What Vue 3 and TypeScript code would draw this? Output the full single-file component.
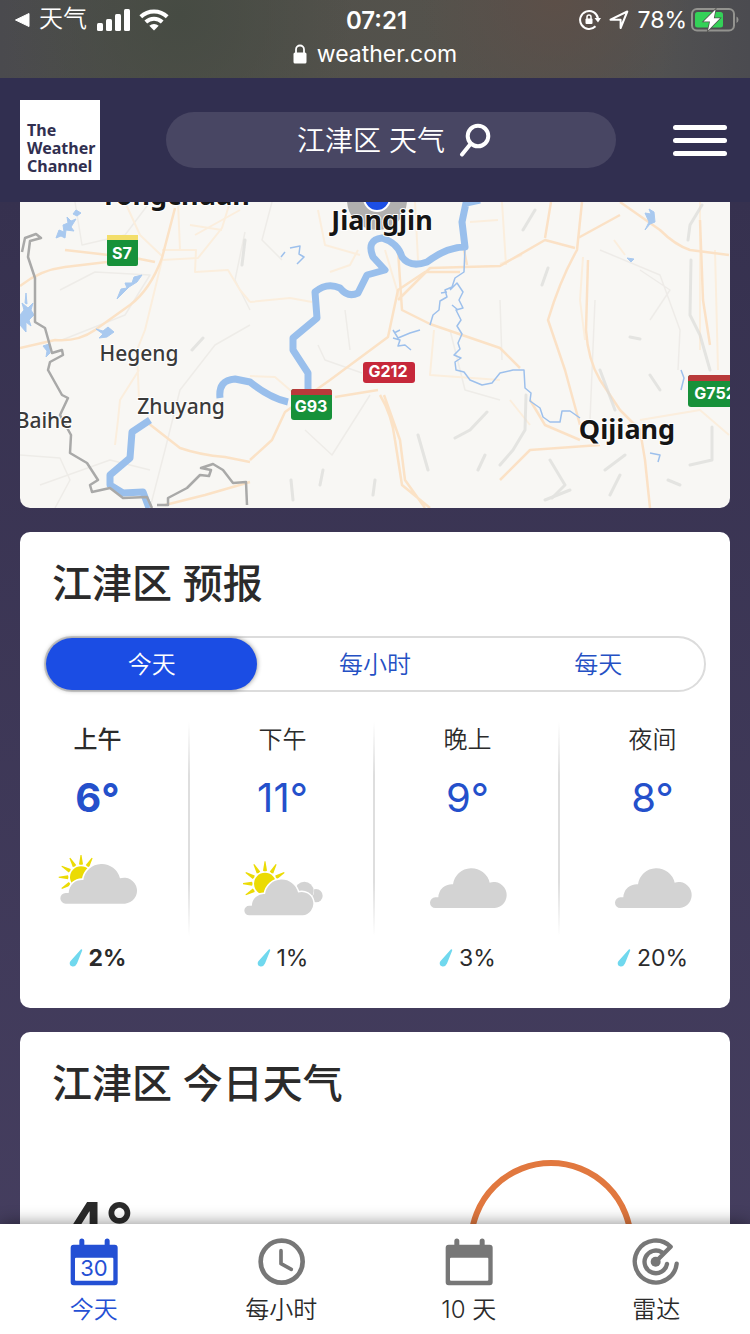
<script setup lang="ts">
import { ref } from 'vue'

type Sky = 'sunny-cloud' | 'sunny-clouds' | 'cloud'

interface Period {
  label: string
  temp: string
  sky: Sky
  rain: string
}

const tabs = ['今天', '每小时', '每天']
const activeTab = ref(0)

const periods: Period[] = [
  { label: '上午', temp: '6°', sky: 'sunny-cloud', rain: '2%' },
  { label: '下午', temp: '11°', sky: 'sunny-clouds', rain: '1%' },
  { label: '晚上', temp: '9°', sky: 'cloud', rain: '3%' },
  { label: '夜间', temp: '8°', sky: 'cloud', rain: '20%' },
]

const navItems = [
  { id: 'today', label: '今天' },
  { id: 'hourly', label: '每小时' },
  { id: 'tenday', label: '10 天' },
  { id: 'radar', label: '雷达' },
]

const cloudPath =
  'M16 0a16 16 0 0 1 0-32H25A40 40 0 0 1 69-71A56 56 0 0 1 179-76A39 39 0 1 1 194 0Z'
const rayAngles: Record<string, number[]> = {
  'sunny-cloud': [-120, -90, -60, -30, 0, 30],
  'sunny-clouds': [-120, -90, -60, -30, 0, 30, 60],
}
</script>

<template>
  <div class="app">
    <div class="status">
      <div class="status-row">
        <div class="status-left">
          <svg width="16" height="16" viewBox="0 0 16 16"><path d="M1.500 8L15 1.500V14.500Z" fill="#fff" stroke="#fff" stroke-linejoin="round" /></svg>
          <span class="back">天气</span>
          <svg width="34" height="22" viewBox="0 0 34 22" fill="#fff">
            <rect x="0" y="14" width="6" height="8" rx="1.500" />
            <rect x="9" y="10" width="6" height="12" rx="1.500" />
            <rect x="18" y="5" width="6" height="17" rx="1.500" />
            <rect x="27" y="0" width="6" height="22" rx="1.500" />
          </svg>
          <svg class="wifi" width="30" height="22" viewBox="0 0 30 22" fill="none" stroke="#fff" stroke-width="4">
            <path d="M1.800 7.800A19 19 0 0 1 28.200 7.800" />
            <path d="M6.800 13A12 12 0 0 1 23.200 13" />
            <path d="M15 21.500L10.300 16.800A7 7 0 0 1 19.700 16.800Z" fill="#fff" stroke="none" />
          </svg>
        </div>
        <span class="time">07:21</span>
        <div class="status-right">
          <svg width="22" height="22" viewBox="0 0 22 22" fill="none" stroke="#fff" stroke-width="2">
            <path d="M19 9.500A9 9 0 1 0 16.500 17.300" />
            <path d="M15.500 9H22L19 13.500Z" fill="#fff" stroke="none" />
            <rect x="6.500" y="9.500" width="7" height="5.500" rx="1" fill="#fff" stroke="none" />
            <path d="M8 10V8a2 2 0 0 1 4 0V10" stroke-width="1.500" />
          </svg>
          <svg width="20" height="20" viewBox="0 0 20 20" fill="none" stroke="#fff" stroke-width="2" stroke-linejoin="round"><path d="M1.500 9.700L18.300 1.500L11.600 18V9.700Z" /></svg>
          <span class="percent">78%</span>
          <svg class="battery" width="48" height="24" viewBox="0 0 48 24">
            <rect x="1" y="1" width="42" height="21.500" rx="5" fill="none" stroke="#93938f" stroke-width="2" />
            <path d="M45.500 8.500Q47.500 9.500 47.500 11.700T45.500 15Z" fill="#93938f" />
            <rect x="4" y="4" width="28" height="15.500" rx="2.500" fill="#34d158" />
            <path d="M24.500 1.500L12.500 13.500H19L17 22.500L29 10.300H22.800Z" fill="#fff" stroke="#53534f" stroke-width="1.500" paint-order="stroke" />
          </svg>
        </div>
      </div>
      <div class="url">
        <svg width="14" height="20" viewBox="0 0 14 20"><path d="M3 10V5.500a4 4 0 0 1 8 0V10" fill="none" stroke="#fff" stroke-width="1.800" /><rect x="0.500" y="8.500" width="13" height="11" rx="1.500" fill="#fff" /></svg>
        <span>weather.com</span>
      </div>
    </div>

    <header class="header">
      <a href="#" class="logo">The<br />Weather<br />Channel</a>
      <button type="button" class="search">
        <span>江津区 天气</span>
        <svg width="32" height="34" viewBox="0 0 32 34" fill="none" stroke="#fff" stroke-width="4" stroke-linecap="round">
          <circle cx="19" cy="13" r="10.300" />
          <path d="M11.500 21L3 31.500" />
        </svg>
      </button>
      <button type="button" class="menu" aria-label="菜单"><i></i><i></i><i></i></button>
    </header>

    <main class="main">
      <svg class="map" viewBox="20 202 710 306" preserveAspectRatio="xMidYMid slice" role="img" aria-label="地图">
        <rect x="20" y="202" width="710" height="306" fill="#f8f7f4" />
        <g fill="none" stroke="#eeece8" stroke-width="1.500" stroke-linejoin="round">
          <path d="M75 202L82 245L125 235L150 202M60 290L95 272L150 275L125 315L62 340M20 455L60 458L70 480L55 508" />
          <path d="M250 325L215 345L180 390L165 450L150 508M245 232L235 280L250 310M318 345L325 360L362 373M345 310L350 350M370 395L332 455L305 430" />
          <path d="M595 300L590 420M600 250L660 275L680 330L678 370M500 300L502 360M640 270L670 290L650 320" />
          <path d="M272 202L262 240L282 260M450 330L465 390L500 400M40 485L110 460L150 470" />
        </g>
        <g fill="none" stroke="#fbeedd" stroke-width="2" stroke-linejoin="round">
          <path d="M125 202L140 235L162 256M230 202L222 228L198 258L162 260M178 202L180 250M190 225L222 230M162 250H196L195 272L228 270L240 290L250 302" />
          <path d="M162 260L145 330L137 350L139 400M139 370L120 400L118 420L115 445M195 235L240 210" />
          <path d="M250 302L290 298L312 302M318 210L325 245L360 255M330 272L350 265L358 250M250 376L275 377L305 403M415 202L418 260M470 222L498 220M434 330L430 375L500 380" />
          <path d="M614 240L625 255M583 257L580 300L585 340M640 420L700 410L729 435M502 202L506 265M500 264L522 255M510 400L530 425M700 202V350M715 250L718 370M385 250L400 300" />
        </g>
        <g fill="none" stroke="#fbe2c6" stroke-width="2.500" stroke-linejoin="round">
          <path d="M175 208L162 258Q150 290 130 305L95 330Q78 342 55 340L20 348M20 286Q40 270 65 267L107 262M155 262L135 258L65 250" />
          <path d="M148 423L180 448Q200 455 225 457L250 462M250 460L272 440L285 412L330 380L388 337L398 290L425 272L460 272M250 482L205 495L165 505" />
          <path d="M398 250L402 310L430 324L500 348L520 368M398 300L430 268L500 266L545 240L575 248M380 395Q392 415 395 440L402 485L430 508M384 395L400 440L405 480L425 508M335 397L378 390" />
          <path d="M551 202L545 238M582 202L577 250Q560 280 548 320L565 370L580 425M620 202L660 230Q675 245 690 250L729 255M578 238L620 215M588 260L586 330Q588 360 600 380L620 410L640 430L645 460L650 508" />
          <path d="M700 220L703 300L710 345M500 480L530 450L600 445M530 400L545 425L580 440M465 202L462 240L467 265" />
        </g>
        <g fill="none" stroke="#dcdcd9" stroke-width="3" stroke-linecap="round" stroke-linejoin="round" opacity="0.700">
          <path d="M702 205L690 225L688 240M691 260L690 315L700 335L710 370M535 210L523 230M548 268L542 285" />
          <path d="M526 395L525 430L513 450L500 465M550 460L565 485L552 498M600 370L615 410M650 375L660 390M630 337L640 339M712 427V460L690 465M625 455L605 470M620 475L610 495M668 480L680 485M487 412L470 430L455 438" />
          <path d="M418 435L428 470M323 470L320 485M291 480L293 500M375 480L373 495M485 455L478 470M203 338L192 350M245 240L242 265M570 490L545 500" />
        </g>
        <g fill="none" stroke="#99bfec" stroke-width="7" stroke-linejoin="round">
          <path d="M480 200L466 203L462 222L465 247Q447 247 427 262Q410 268 402 257Q398 243 382 238Q366 240 373 257L385 270L367 275L358 293Q348 298 340 288Q327 282 315 292L317 318L293 338V350L308 373V390" />
          <path d="M288 402Q270 398 250 382L235 379Q218 380 220 398" />
          <path d="M150 420L132 432L130 458L110 475V485L123 493L143 492L149 508" />
        </g>
        <g fill="none" stroke="#9dc0ec" stroke-width="1.500" stroke-linejoin="round">
          <path d="M465 247L464 272L455 278L452 287L445 290L447 297L440 301L439 310L433 315L430 325M450 290L457 283L463 292L459 300L463 308L456 310L461 320L457 326L462 334L458 343L460 349L454 355L461 358L455 362L456 370L464 372L470 380L482 385L492 383L500 373L513 370H524L525 388L531 393L530 401L540 408L543 417L550 422H560L562 411H570L580 418" />
          <path d="M393 330L398 338L410 333L420 330M393 338L400 340L398 346L405 345L411 350M394 333L400 330M281 257L285 252M290 248L300 246L299 254L304 257L297 264M650 453L660 455L658 462M447 292L441 293M458 310L452 305M681 370L684 378L681 390" />
        </g>
        <g fill="#a9c9ef" stroke="#a9c9ef" stroke-linejoin="round">
          <path d="M56 238L59 230L64 232L63 225L68 223L67 217L71 221L76 219L71 227L74 231L66 230L65 238L61 236ZM73 214L76 210L81 213L77 216ZM117 299L121 289L127 288L125 283L132 283L134 277L142 275L137 282L129 287L124 292Z" />
          <path d="M20 315L24 310L22 303L28 308L33 303L31 310L34 315L29 320L31 326L26 322V332L20 325ZM26 293L27 304L25 303ZM96 329L103 331L108 327L114 332L107 337L99 338L103 334ZM43 346L49 344L50 353L46 357L47 351ZM645 213L651 214L649 209L654 212L655 222L650 224L645 230L649 222ZM627 258L634 259L631 262Z" />
        </g>
        <path d="M22 252L25 238L36 234L41 238L30 241L28 257L35 278V322L45 328L52 353L62 350L63 355L50 362L48 370L62 395L68 398L60 415L71 435L70 453L87 463L98 480L90 485L92 492L110 488L123 498L147 497L152 508M157 505L168 505V498L187 488L200 475L209 476L211 470L201 468L213 464L223 470L233 483L246 482L247 505" fill="none" stroke="#a9a9a8" stroke-width="2.500" stroke-linejoin="round" />

        <circle cx="377" cy="200" r="30" fill="#777" opacity="0.550" />
        <circle cx="377" cy="198" r="13" fill="#1c4ee4" stroke="#fff" stroke-width="2" />

        <g class="places">
          <text x="175" y="205" class="city">Yongchuan</text>
          <text x="382" y="230" class="city">Jiangjin</text>
          <text x="627" y="439" class="city">Qijiang</text>
          <text x="139" y="361">Hegeng</text>
          <text x="181" y="414">Zhuyang</text>
          <text x="44" y="428">Baihe</text>
        </g>
        <g class="shields">
          <rect x="107" y="235" width="31" height="31" rx="2" fill="#17913a" />
          <rect x="107" y="235" width="31" height="5" fill="#f3de6a" />
          <text x="122" y="259">S7</text>
          <rect x="291" y="389" width="41" height="31" rx="3" fill="#17913a" />
          <path d="M291 395V392Q291 389 294 389H329Q332 389 332 392V395Z" fill="#b93a3a" />
          <text x="311" y="412">G93</text>
          <rect x="363" y="362" width="52" height="21" rx="3" fill="#c6283a" />
          <text x="388" y="377">G212</text>
          <rect x="688" y="375" width="54" height="32" rx="3" fill="#17913a" />
          <path d="M688 381V378Q688 375 691 375H740V381Z" fill="#b93a3a" />
          <text x="715" y="399">G752</text>
        </g>
      </svg>

      <section class="card forecast">
        <h2>江津区 预报</h2>
        <div class="tabs" role="tablist">
          <button
            v-for="(tab, i) in tabs"
            :key="tab"
            type="button"
            role="tab"
            :aria-selected="i === activeTab"
            :class="{ active: i === activeTab }"
            @click="activeTab = i"
          >{{ tab }}</button>
        </div>
        <ul class="periods">
          <li v-for="(p, i) in periods" :key="p.label" :class="{ now: i === 0 }">
            <span class="label">{{ p.label }}</span>
            <span class="temp">{{ p.temp }}</span>
            <svg class="sky" width="80" height="72" viewBox="0 0 240 216">
              <g v-if="p.sky !== 'cloud'" :transform="p.sky === 'sunny-cloud' ? 'translate(69 82)' : 'translate(66 101)'" fill="#ebdb04">
                <circle r="33" />
                <path v-for="a in rayAngles[p.sky]" :key="a" d="M-6-39Q0-36 6-39L1.500-67H-1.500Z" :transform="`rotate(${a})`" />
              </g>
              <g v-if="p.sky === 'sunny-clouds'" fill="#d3d3d3">
                <circle cx="219" cy="137" r="20" />
                <circle cx="184" cy="123" r="28" stroke="#fff" stroke-width="3" paint-order="stroke" />
                <path :d="cloudPath" transform="translate(4 196) scale(0.900)" class="cloud" />
              </g>
              <path v-else :d="cloudPath" :transform="p.sky === 'cloud' ? 'translate(6 174)' : 'translate(7 161)'" class="cloud" />
            </svg>
            <span class="rain">
              <svg width="14" height="18" viewBox="0 0 14 18"><path d="M11.800 0.600Q13.400-0.200 13.200 1.600L8 14.500Q6.500 17.800 3.500 17.400Q0.200 16.900 0.800 13.600Q1 12.500 2 11.500Z" fill="#70d8ee" /></svg>
              {{ p.rain }}
            </span>
          </li>
        </ul>
      </section>

      <section class="card today">
        <h2>江津区 今日天气</h2>
        <div class="today-row">
          <span class="big-temp">4°</span>
          <svg class="sun-arc" width="168" height="84" viewBox="0 0 168 84"><circle cx="84" cy="84" r="80" fill="none" stroke="#e1783f" stroke-width="6" /></svg>
        </div>
      </section>
    </main>

    <nav class="nav">
      <a v-for="item in navItems" :key="item.id" href="#" :class="{ current: item.id === 'today' }">
        <svg width="48" height="48" viewBox="0 0 144 144">
          <template v-if="item.id === 'today' || item.id === 'tenday'">
            <path fill="currentColor" fill-rule="evenodd" d="M28 20V9a7.500 7.500 0 0 1 15 0V20H104V9a7.500 7.500 0 0 1 15 0V20H134a9 9 0 0 1 9 9V133a9 9 0 0 1-9 9H11a9 9 0 0 1-9-9V29a9 9 0 0 1 9-9ZM18 59a3 3 0 0 0-3 3V125a3 3 0 0 0 3 3H127a3 3 0 0 0 3-3V62a3 3 0 0 0-3-3Z" />
            <text v-if="item.id === 'today'" x="72" y="115" class="day">30</text>
          </template>
          <g v-else-if="item.id === 'hourly'" fill="none" stroke="currentColor" stroke-linecap="round" stroke-linejoin="round">
            <circle cx="74" cy="71" r="63" stroke-width="14" />
            <path d="M72 38V77L103 94" stroke-width="11" />
          </g>
          <g v-else fill="none" stroke="currentColor" stroke-width="13" stroke-linecap="round" stroke-linejoin="round">
            <path d="M134 77A63 63 0 1 1 116 26L71 71M105 78A34 34 0 1 1 90 43" />
            <circle cx="71" cy="71" r="15" fill="currentColor" stroke="none" />
          </g>
        </svg>
        <span>{{ item.label }}</span>
      </a>
    </nav>
  </div>
</template>

<style>
body {
  margin: 0;
}
</style>

<style scoped>
* {
  box-sizing: border-box;
}
.app {
  height: 100vh;
  display: flex;
  flex-direction: column;
  overflow: hidden;
  font-family: Inter, "Noto Sans CJK SC", sans-serif;
  color: #2b2b2b;
  background: linear-gradient(#36314f 0, #36314f 200px, #463f60 100%);
}
button {
  font: inherit;
  border: 0;
  padding: 0;
  margin: 0;
  background: none;
  cursor: pointer;
}
a {
  color: inherit;
  text-decoration: none;
}
svg {
  display: block;
  flex: none;
}
.status {
  flex: none;
  height: 78px;
  color: #fff;
  background:
    radial-gradient(circle at 24% 20%, #464b43 0, transparent 30%),
    radial-gradient(circle at 74% 0, #5c4f48 0, transparent 24%),
    linear-gradient(90deg, #4a4a4e 0, #50504a 22%, #54524c 60%, #515151 88%, #4b4b50 100%);
}
.status-row {
  display: grid;
  grid-template-columns: 1fr auto 1fr;
  align-items: center;
  height: 40px;
  padding: 0 11px 0 14px;
}
.status-left,
.status-right {
  display: flex;
  align-items: center;
}
.status-right {
  justify-content: flex-end;
  gap: 8px;
}
.back {
  margin: 0 10px 0 9px;
  padding-bottom: 3px;
  font-size: 24px;
  line-height: 36px;
  font-weight: 350;
}
.wifi {
  margin-left: 8px;
}
.time {
  font-size: 24px;
  font-weight: 600;
}
.percent {
  font-size: 23px;
}
.battery {
  margin-left: -4px;
}
.url {
  display: flex;
  align-items: center;
  justify-content: center;
  gap: 10px;
  height: 28px;
  font-size: 23px;
}
.header {
  flex: none;
  display: flex;
  align-items: center;
  height: 124px;
  padding: 0 23px 0 20px;
  background: #312f50;
}
.logo {
  width: 80px;
  height: 80px;
  padding: 21px 0 0 7px;
  background: #fff;
  color: #312f50;
  font: 700 16px/18px "Noto Sans", "Open Sans", sans-serif;
}
.search {
  flex: 1;
  display: flex;
  align-items: center;
  justify-content: center;
  gap: 14px;
  height: 56px;
  margin: 0 57px 0 66px;
  padding-left: 6px;
  border-radius: 28px;
  background: #484663;
  color: #fff;
  font-size: 28px;
  font-weight: 350;
}
.search span {
  padding-bottom: 3px;
}
.menu {
  display: flex;
  flex-direction: column;
  gap: 8px;
}
.menu i {
  width: 54px;
  height: 5px;
  border-radius: 3px;
  background: #fff;
}
.main {
  flex: 1;
  min-height: 0;
  overflow: hidden;
  display: flex;
  flex-direction: column;
  gap: 24px;
  padding: 0 20px;
}
.map {
  width: 100%;
  height: 306px;
  border-radius: 0 0 10px 10px;
}
.places text {
  font: 500 21px "Noto Sans", "Open Sans", sans-serif;
  fill: #3a3a3a;
  stroke: #fff;
  stroke-width: 2px;
  paint-order: stroke;
  text-anchor: middle;
}
.places .city {
  font-size: 27px;
  font-weight: 700;
  fill: #151515;
}
.shields text {
  font: 700 16px Inter, sans-serif;
  fill: #fff;
  text-anchor: middle;
}
.card {
  flex: none;
  padding: 28px 24px 36px;
  border-radius: 10px;
  background: #fff;
  overflow: hidden;
}
h2 {
  margin: 0 0 28px 8px;
  font-size: 40px;
  line-height: 48px;
  font-weight: 500;
}
.tabs {
  display: flex;
  height: 56px;
  border: 2px solid #dcdcdc;
  border-radius: 28px;
}
.tabs button {
  flex: 1 1 auto;
  padding-bottom: 3px;
  border-radius: 26px;
  color: #2450c4;
  font-size: 24px;
  font-weight: 350;
}
.tabs .active {
  background: #1b4de4;
  color: #fff;
  box-shadow: 0 0 5px #0007;
}
.periods {
  display: grid;
  grid-template-columns: repeat(4, 1fr);
  margin: 30px -39px 0;
  padding: 0;
  list-style: none;
}
.periods li {
  display: flex;
  flex-direction: column;
  align-items: center;
  background: linear-gradient(#fff, #dedede 25%, #dedede 75%, #fff) right top / 2px 214px no-repeat;
}
.periods li:last-child {
  background: none;
}
.label {
  font-size: 24px;
  line-height: 36px;
  font-weight: 350;
}
.temp {
  margin: 16px 0 28px;
  font-size: 40px;
  line-height: 48px;
  color: #2450cb;
}
.now .label {
  font-weight: 500;
}
.now .temp,
.now .rain {
  font-weight: 700;
}
.cloud {
  fill: #d3d3d3;
  stroke: #fff;
  stroke-width: 10px;
  paint-order: stroke;
}
.rain {
  display: flex;
  align-items: center;
  gap: 6px;
  margin-top: 22px;
  font-size: 23px;
  line-height: 28px;
}
.today-row {
  display: flex;
  justify-content: space-between;
  align-items: flex-start;
  margin-top: 51px;
  padding: 0 71px 0 20px;
}
.big-temp {
  margin-top: 28px;
  font-size: 64px;
  line-height: 78px;
  font-weight: 600;
}
.nav {
  flex: none;
  position: relative;
  display: grid;
  grid-template-columns: repeat(4, 1fr);
  height: 110px;
  padding-top: 14px;
  background: #fff;
  box-shadow: 0 0 16px #0007;
}
.nav a {
  display: flex;
  flex-direction: column;
  align-items: center;
  gap: 6px;
  font-size: 24px;
  line-height: 36px;
  font-weight: 350;
}
.nav svg {
  color: #777;
}
.nav .current,
.nav .current svg {
  color: #2450d4;
}
.day {
  font: 400 66px Inter, sans-serif;
  fill: currentColor;
  text-anchor: middle;
}
</style>
